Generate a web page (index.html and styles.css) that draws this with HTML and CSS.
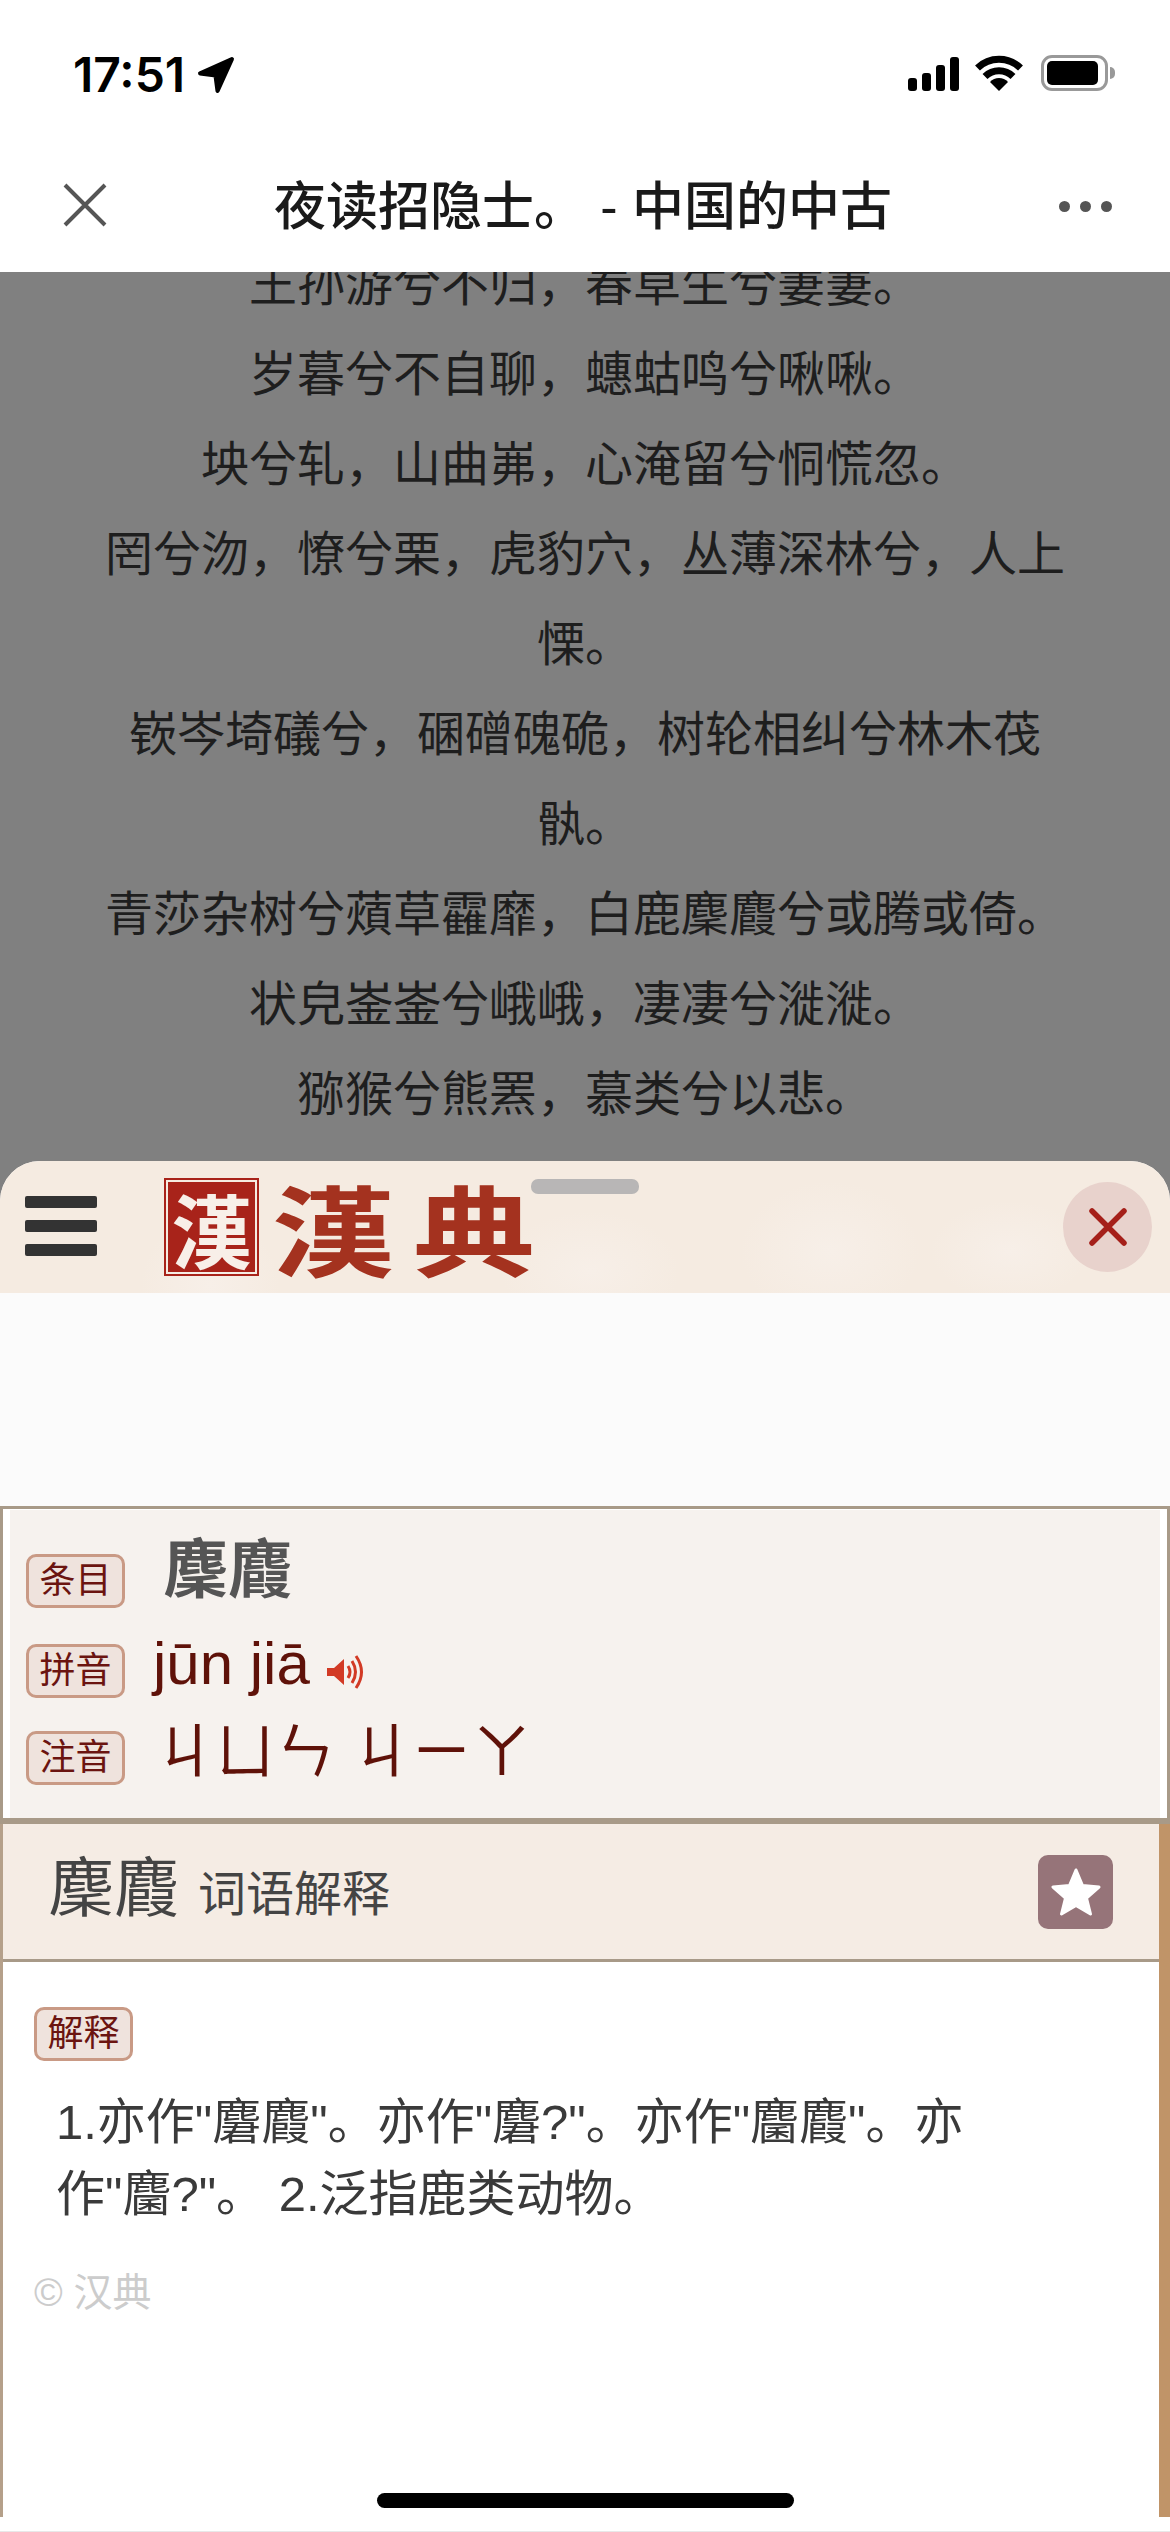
FILE: index.html
```html
<!DOCTYPE html>
<html lang="zh-CN">
<head>
  <meta charset="UTF-8">
  <meta name="viewport" content="width=device-width, initial-scale=1.0">
  <title>夜读招隐士。 - 中国的中古</title>
  <link rel="stylesheet" href="styles.css">
</head>
<body>
  <div class="phone">
    <div class="status-bar">
      <div class="status-left">
        <span class="clock">17:51</span>
        <svg class="arrow-icon" width="38" height="38" viewBox="0 0 37 37">
          <path d="M34 3 L3 17 L18 19 L20 34 Z" fill="#000" stroke="#000" stroke-width="4" stroke-linejoin="round"/>
        </svg>
      </div>
      <div class="status-right">
        <div class="signal">
          <span class="bar bar-1"></span>
          <span class="bar bar-2"></span>
          <span class="bar bar-3"></span>
          <span class="bar bar-4"></span>
        </div>
        <svg class="wifi-icon" width="48" height="36" viewBox="0 0 48 36">
          <path d="M2.5 13 A31 31 0 0 1 45.5 13" fill="none" stroke="#000" stroke-width="7"/>
          <path d="M10 21.5 A20 20 0 0 1 38 21.5" fill="none" stroke="#000" stroke-width="7"/>
          <path d="M24 36 L15 27 A12 12 0 0 1 33 27 Z" fill="#000"/>
        </svg>
        <div class="battery">
          <div class="battery-body"><span class="battery-level"></span></div>
          <span class="battery-cap"></span>
        </div>
      </div>
    </div>

    <div class="nav-bar">
      <svg class="nav-close" width="44" height="44" viewBox="0 0 44 44">
        <path d="M2 2 L42 42 M42 2 L2 42" stroke="#555" stroke-width="4" fill="none"/>
      </svg>
      <h1 class="nav-title">夜读招隐士。 - 中国的中古</h1>
      <div class="nav-more">
        <span class="dot"></span>
        <span class="dot"></span>
        <span class="dot"></span>
      </div>
    </div>

    <div class="dimmed">
      <div class="poem">
        <div class="poem-text">
          <p>王孙游兮不归，春草生兮萋萋。</p>
          <p>岁暮兮不自聊，蟪蛄鸣兮啾啾。</p>
          <p>坱兮轧，山曲岪，心淹留兮恫慌忽。</p>
          <p>罔兮沕，憭兮栗，虎豹穴，丛薄深林兮，人上慄。</p>
          <p>嵚岑埼礒兮，碅磳磈硊，树轮相纠兮林木茷骫。</p>
          <p>青莎杂树兮薠草靃靡，白鹿麇麚兮或腾或倚。</p>
          <p>状皃崟崟兮峨峨，凄凄兮漇漇。</p>
          <p>猕猴兮熊罴，慕类兮以悲。</p>
        </div>
      </div>

      <div class="sheet">
        <div class="sheet-header">
          <span class="grabber"></span>
          <div class="menu-btn">
            <span></span>
            <span></span>
            <span></span>
          </div>
          <div class="logo">
            <span class="logo-seal">漢</span>
            <span class="logo-char">漢</span>
            <span class="logo-char">典</span>
          </div>
          <div class="close-btn">
            <svg width="38" height="38" viewBox="0 0 38 38">
              <path d="M3 3 L35 35 M35 3 L3 35" stroke="#a5201a" stroke-width="5.5" stroke-linecap="round" fill="none"/>
            </svg>
          </div>
        </div>

        <div class="blank"></div>

        <div class="entry">
          <div class="entry-inner">
            <div class="entry-row row-word">
              <span class="tag">条目</span>
              <span class="word">麇麚</span>
            </div>
            <div class="entry-row row-pinyin">
              <span class="tag">拼音</span>
              <span class="pinyin">jūn jiā</span>
              <svg class="sound-icon" width="39" height="34" viewBox="0 0 39 34">
                <path d="M0 13 L7 13 L17 4 L17 30 L7 21 L0 21 Z" fill="#d23a25"/>
                <path d="M21 11 Q25 17 21 23" fill="none" stroke="#d23a25" stroke-width="3"/>
                <path d="M25 6 Q32 17 25 28" fill="none" stroke="#d23a25" stroke-width="3"/>
                <path d="M29 1 Q40 17 29 33" fill="none" stroke="#d23a25" stroke-width="3"/>
              </svg>
            </div>
            <div class="entry-row row-zhuyin">
              <span class="tag">注音</span>
              <span class="zhuyin">ㄐㄩㄣ ㄐㄧㄚ</span>
            </div>
          </div>
        </div>

        <div class="meaning">
          <div class="meaning-head">
            <h2 class="meaning-title">麇麚<span class="meaning-sub">词语解释</span></h2>
            <div class="star-btn">
              <svg width="50" height="48" viewBox="0 0 50 48">
                <path d="M25 2 L31.5 17.5 L48 19 L35.5 30 L39.5 46 L25 37.5 L10.5 46 L14.5 30 L2 19 L18.5 17.5 Z" fill="#fff" stroke="#fff" stroke-width="3" stroke-linejoin="round"/>
              </svg>
            </div>
          </div>
          <div class="meaning-body">
            <span class="tag">解释</span>
            <p class="meaning-text">1.亦作"麏麚"。亦作"麏?"。亦作"麕麚"。亦作"麕?"。 2.泛指鹿类动物。</p>
            <p class="copyright">© 汉典</p>
          </div>
        </div>
      </div>
    </div>

    <span class="home-bar"></span>
  </div>
</body>
</html>
```

FILE: styles.css
```css
* {
  margin: 0;
  padding: 0;
  box-sizing: border-box;
}
body {
  font-family: "Liberation Sans", "Noto Sans CJK SC", sans-serif;
  background: #fff;
}
.phone {
  position: relative;
  width: 1170px;
  height: 2532px;
  overflow: hidden;
  background: #fff;
}
.status-bar {
  height: 160px;
  padding: 55px 55px 0 73px;
  display: flex;
  justify-content: space-between;
  align-items: flex-start;
}
.status-left {
  display: flex;
  align-items: center;
  gap: 12px;
}
.clock {
  font-family: Inter, sans-serif;
  font-size: 48px;
  font-weight: 600;
  line-height: 40px;
  color: #000;
}
.status-right {
  display: flex;
  align-items: flex-start;
}
.signal {
  display: flex;
  align-items: flex-end;
  gap: 5px;
  height: 36px;
  margin-right: 16px;
}
.bar {
  width: 9px;
  background: #000;
  border-radius: 3px;
}
.bar-1 { height: 13px; }
.bar-2 { height: 18px; }
.bar-3 { height: 26px; }
.bar-4 { height: 34px; }
.battery {
  display: flex;
  align-items: center;
  margin-left: 18px;
}
.battery-body {
  width: 67px;
  height: 36px;
  padding: 3px;
  border: 3px solid #999;
  border-radius: 11px;
}
.battery-level {
  display: block;
  width: 51px;
  height: 24px;
  background: #000;
  border-radius: 5px;
}
.battery-cap {
  width: 5px;
  height: 12px;
  margin-left: 2px;
  background: #999;
  border-radius: 0 6px 6px 0;
}
.nav-bar {
  height: 112px;
  display: flex;
  align-items: center;
  padding: 0 58px 0 63px;
  background: #fff;
}
.nav-close {
  flex: none;
  margin-top: -22px;
}
.nav-title {
  flex: 1;
  margin-top: -19px;
  font-size: 52px;
  font-weight: 500;
  line-height: 60px;
  text-align: center;
  color: #1a1a1a;
  white-space: nowrap;
}
.nav-more {
  display: flex;
  gap: 10px;
  margin-top: -20px;
}
.dot {
  width: 11px;
  height: 11px;
  background: #555;
  border-radius: 50%;
}
.dimmed {
  background: #808080;
}
.poem {
  height: 889px;
  overflow: hidden;
}
.poem-text {
  margin-top: -32px;
  padding: 0 100px;
  font-size: 48px;
  line-height: 90px;
  text-align: center;
  color: #1e1e1e;
}
.sheet {
  height: 1371px;
  background: #fff;
  border-radius: 40px 40px 0 0;
  border-bottom: 1px solid #e8e8e8;
}
.sheet-header {
  position: relative;
  height: 132px;
  display: flex;
  align-items: center;
  padding: 0 18px 0 25px;
  border-radius: 40px 40px 0 0;
  background-color: #f5ebe1;
  background-image:
    radial-gradient(ellipse 70px 70px at 210px 125px, #f7efe8 0, transparent 100%),
    radial-gradient(ellipse 90px 60px at 590px 110px, #f7efe8 0, transparent 100%),
    radial-gradient(ellipse 90px 70px at 830px 90px, #f7efe8 0, transparent 100%),
    radial-gradient(ellipse 80px 50px at 1010px 90px, #f7efe8 0, transparent 100%);
}
.grabber {
  position: absolute;
  left: 531px;
  top: 18px;
  width: 108px;
  height: 15px;
  background: #b8b6b6;
  border-radius: 7px;
}
.menu-btn {
  flex: none;
  display: flex;
  flex-direction: column;
  gap: 12px;
  width: 72px;
  margin-top: -3px;
}
.menu-btn span {
  height: 12px;
  background: #333;
  border-radius: 2px;
}
.logo {
  display: flex;
  align-items: center;
  margin-left: 71px;
  color: #a4321f;
  font-family: "Noto Sans CJK TC", "Noto Sans CJK SC", sans-serif;
  font-weight: 700;
}
.logo-seal {
  flex: none;
  width: 87px;
  height: 90px;
  margin-right: 17px;
  background: #a8231a;
  outline: 2px solid #a8231a;
  outline-offset: 2px;
  color: #f8efe8;
  font-size: 80px;
  line-height: 90px;
  text-align: center;
}
.logo-char {
  display: block;
  margin-right: 19px;
  font-size: 122px;
  line-height: 124px;
  transform: scaleY(.8);
}
.close-btn {
  flex: none;
  display: flex;
  align-items: center;
  justify-content: center;
  width: 89px;
  height: 90px;
  margin-left: auto;
  background: #e8d2cc;
  border-radius: 50%;
}
.blank {
  height: 213px;
  background: #fbfbfb;
}
.entry {
  height: 318px;
  padding: 1px 7px 0;
  background: #fff;
  border: solid #a89a88;
  border-width: 3px 3px 6px;
}
.entry-inner {
  height: 100%;
  padding: 44px 0 0 16px;
  background: #f6f2ee;
}
.entry-row {
  display: flex;
  height: 53px;
}
.row-pinyin {
  margin-top: 37px;
}
.row-zhuyin {
  margin-top: 34px;
}
.tag {
  flex: none;
  display: block;
  width: 99px;
  height: 54px;
  border: 3px solid #c99a85;
  border-radius: 10px;
  background: #efe3dd;
  font-size: 36px;
  line-height: 48px;
  text-align: center;
  color: #6b1410;
}
.word {
  margin: -10px 0 0 39px;
  font-size: 64px;
  font-weight: 700;
  line-height: 53px;
  color: #555;
}
.pinyin {
  margin: -7px 0 0 28px;
  font-size: 60px;
  line-height: 53px;
  color: #5f1209;
}
.sound-icon {
  margin: 11px 0 0 17px;
}
.zhuyin {
  margin: -5px 0 0 30px;
  font-size: 60px;
  line-height: 53px;
  color: #5f1209;
  white-space: pre;
}
.meaning {
  height: 693px;
  background: #fff;
  border-left: 3px solid #b5a08a;
  border-right: 11px solid #c09468;
}
.meaning-head {
  height: 138px;
  display: flex;
  align-items: center;
  justify-content: space-between;
  padding: 0 46px 0 46px;
  background: #f5ece4;
  border-bottom: 3px solid #a89a88;
}
.meaning-title {
  font-size: 65px;
  font-weight: 400;
  line-height: 70px;
  color: #444;
}
.meaning-sub {
  margin-left: 19px;
  font-size: 48px;
}
.star-btn {
  display: flex;
  align-items: center;
  justify-content: center;
  width: 75px;
  height: 74px;
  background: #967479;
  border-radius: 10px;
}
.meaning-body {
  padding: 45px 0 0 31px;
}
.meaning-text {
  margin: 25px 169px 0 22px;
  font-size: 49px;
  line-height: 72px;
  color: #3a3a3a;
}
.copyright {
  margin-top: 41px;
  font-size: 39px;
  line-height: 44px;
  color: #ccc;
}
.home-bar {
  position: absolute;
  left: 377px;
  top: 2493px;
  width: 417px;
  height: 15px;
  background: #000;
  border-radius: 8px;
}
```
